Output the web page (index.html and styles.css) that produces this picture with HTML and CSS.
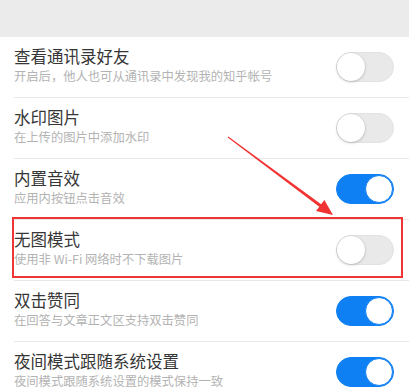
FILE: index.html
```html
<!DOCTYPE html>
<html lang="zh-CN">
<head>
<meta charset="utf-8">
<link rel="stylesheet" href="styles.css">
</head>
<body>
<div class="screen">
  <div class="topband"></div>
  <div class="list">
    <div class="row">
      <div class="text">
        <div class="title">查看通讯录好友</div>
        <div class="sub">开启后，他人也可从通讯录中发现我的知乎帐号</div>
      </div>
      <div class="toggle"><span class="knob"></span></div>
    </div>
    <div class="row">
      <div class="text">
        <div class="title">水印图片</div>
        <div class="sub">在上传的图片中添加水印</div>
      </div>
      <div class="toggle"><span class="knob"></span></div>
    </div>
    <div class="row">
      <div class="text">
        <div class="title">内置音效</div>
        <div class="sub">应用内按钮点击音效</div>
      </div>
      <div class="toggle on"><span class="knob"></span></div>
    </div>
    <div class="row">
      <div class="text">
        <div class="title">无图模式</div>
        <div class="sub">使用非 Wi-Fi 网络时不下载图片</div>
      </div>
      <div class="toggle"><span class="knob"></span></div>
    </div>
    <div class="row">
      <div class="text">
        <div class="title">双击赞同</div>
        <div class="sub">在回答与文章正文区支持双击赞同</div>
      </div>
      <div class="toggle on"><span class="knob"></span></div>
    </div>
    <div class="row">
      <div class="text">
        <div class="title">夜间模式跟随系统设置</div>
        <div class="sub">夜间模式跟随系统设置的模式保持一致</div>
      </div>
      <div class="toggle on"><span class="knob"></span></div>
    </div>
  </div>
  <div class="highlight"></div>
  <svg class="arrow" width="409" height="391" viewBox="0 0 409 391">
    <polygon points="228.3,136.6 321.1,204.3 324.4,199.9 333,215 316,211.1 319.3,206.7 227.7,137.4" fill="#f23333"/>
  </svg>
</div>
</body>
</html>
```
FILE: styles.css
```css
html, body {
  margin: 0;
  padding: 0;
  background: #ffffff;
}
.screen {
  position: relative;
  width: 409px;
  height: 391px;
  overflow: hidden;
  font-family: "Noto Sans CJK SC", "Noto Sans", sans-serif;
}
.topband {
  height: 37px;
  background: #ebebeb;
}
.list {
  display: flex;
  flex-direction: column;
}
.row {
  display: flex;
  align-items: center;
  justify-content: space-between;
  height: 60px;
  margin-left: 14px;
  padding-right: 15px;
  border-bottom: 1px solid #e8e8e8;
}
.text {
  display: flex;
  flex-direction: column;
  gap: 1px;
  margin-top: -4px;
}
.title {
  font-size: 16.5px;
  line-height: 21px;
  color: #363636;
}
.sub {
  font-size: 12.3px;
  line-height: 16px;
  color: #b3b3b3;
}
.toggle {
  position: relative;
  width: 58px;
  height: 30px;
  box-sizing: border-box;
  border-radius: 15px;
  background: #e9e9e9;
  border: 1px solid #e2e2e2;
  flex-shrink: 0;
}
.toggle .knob {
  position: absolute;
  top: 0;
  left: 0;
  width: 28px;
  height: 28px;
  border-radius: 50%;
  background: #ffffff;
  box-shadow: 0 1px 3px rgba(0, 0, 0, 0.18), 0 0 0 0.5px rgba(0, 0, 0, 0.08);
}
.toggle.on {
  background: #0f80f4;
  border-color: #0f80f4;
}
.toggle.on .knob {
  left: auto;
  right: 0;
  box-shadow: none;
  border: 1px solid #0f80f4;
  box-sizing: border-box;
}
.highlight {
  position: absolute;
  left: 12px;
  top: 217px;
  width: 391px;
  height: 61px;
  box-sizing: border-box;
  border: 2px solid #ef3636;
}
.arrow {
  position: absolute;
  left: 0;
  top: 0;
}
```
